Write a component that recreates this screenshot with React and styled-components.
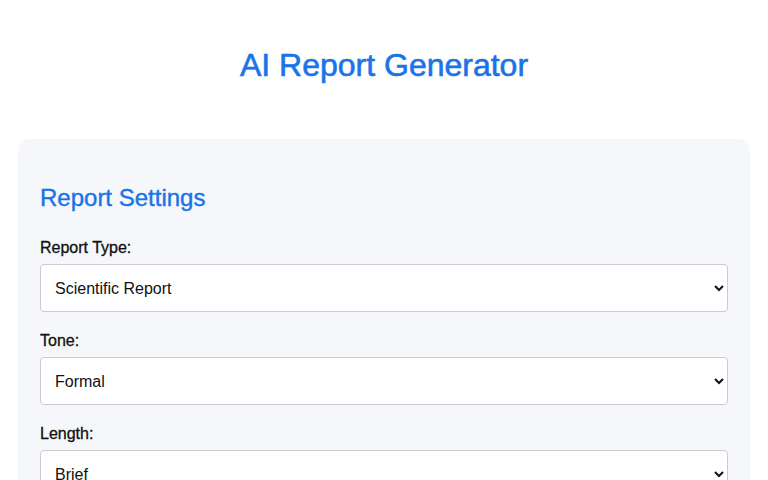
import styled, { createGlobalStyle } from "styled-components";

const GlobalStyle = createGlobalStyle`
  body {
    margin: 0;
    background: #ffffff;
    font-family: "Liberation Sans", Arial, sans-serif;
    color: #222;
  }
`;

const Page = styled.div`
  padding: 0 18px 40px;
`;

const Title = styled.h1`
  margin: 0;
  padding: 47px 0 55px;
  text-align: center;
  font-size: 32px;
  font-weight: normal;
  -webkit-text-stroke: 0.6px #1a73e8;
  color: #1a73e8;
`;

const Card = styled.section`
  background: #f5f7fa;
  border-radius: 12px;
  padding: 45px 22px 22px;
`;

const SectionTitle = styled.h2`
  margin: 0 0 27px;
  font-size: 24px;
  font-weight: normal;
  -webkit-text-stroke: 0.4px #1a73e8;
  color: #1a73e8;
`;

const Field = styled.div`
  display: flex;
  flex-direction: column;
  gap: 7px;
  margin-bottom: 20px;
`;

const Label = styled.label`
  font-size: 16px;
  font-weight: normal;
  -webkit-text-stroke: 0.3px #111;
  color: #111;
`;

const Select = styled.select`
  height: 48px;
  padding: 0 10px;
  font-family: inherit;
  font-size: 16px;
  color: #111;
  background: #fff;
  border: 1px solid #cccccc;
  border-radius: 4px;
`;

const fields = [
  { id: "type", label: "Report Type:", options: ["Scientific Report", "Business Report", "Technical Report"] },
  { id: "tone", label: "Tone:", options: ["Formal", "Casual", "Neutral"] },
  { id: "length", label: "Length:", options: ["Brief", "Medium", "Detailed"] },
];

const App = () => {
  return (
    <Page>
      <GlobalStyle />
      <Title>AI Report Generator</Title>
      <Card>
        <SectionTitle>Report Settings</SectionTitle>
        {fields.map((f) => (
          <Field key={f.id}>
            <Label htmlFor={f.id}>{f.label}</Label>
            <Select id={f.id} defaultValue={f.options[0]}>
              {f.options.map((o) => (
                <option key={o}>{o}</option>
              ))}
            </Select>
          </Field>
        ))}
      </Card>
    </Page>
  );
};

export default App;
